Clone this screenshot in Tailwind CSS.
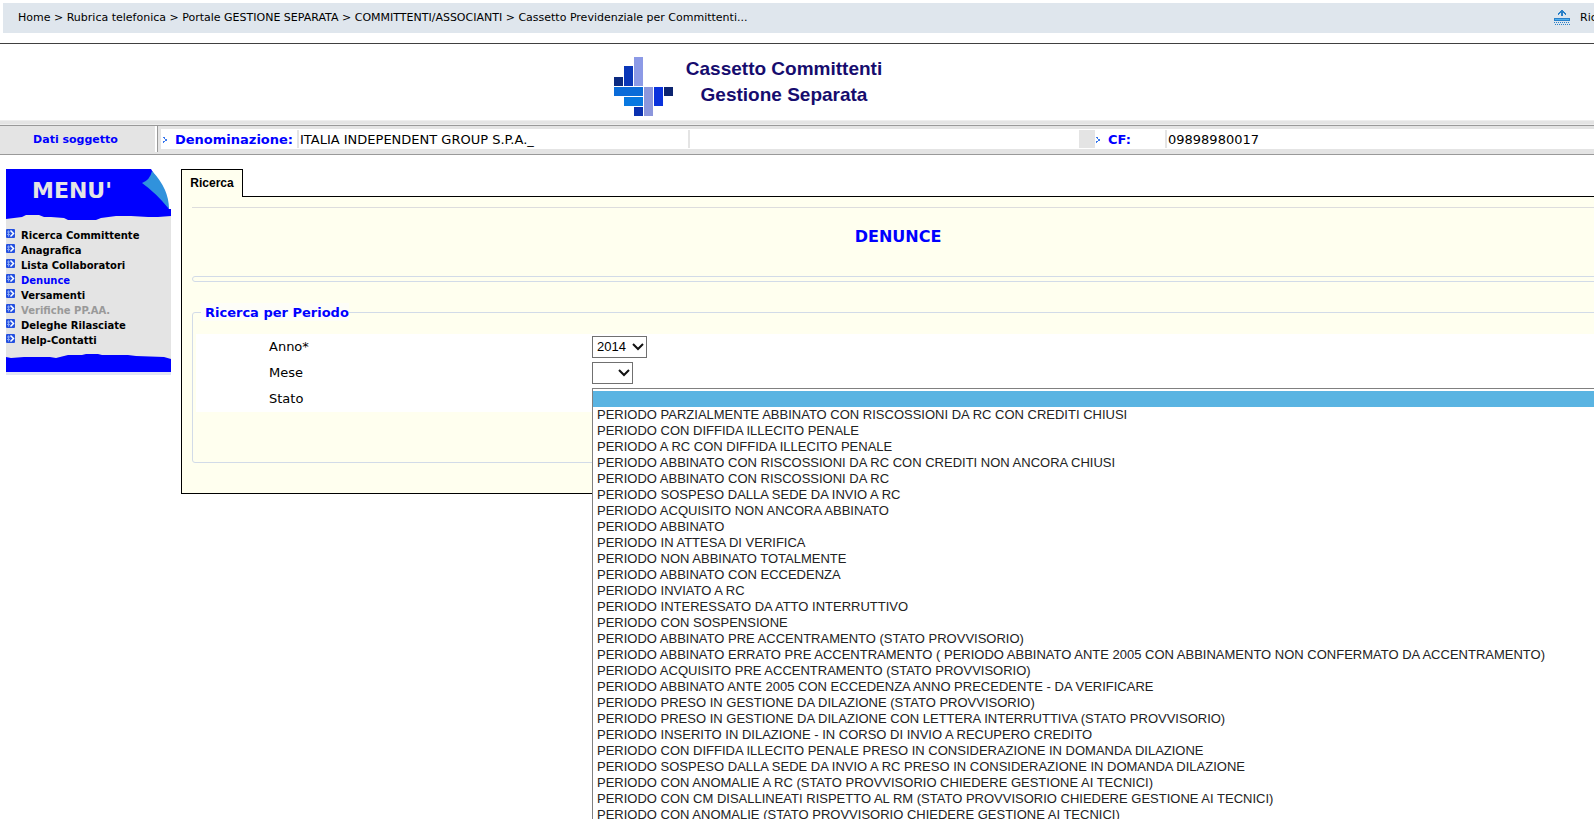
<!DOCTYPE html>
<html lang="it">
<head>
<meta charset="utf-8">
<title>Cassetto Committenti Gestione Separata</title>
<script src="https://cdn.jsdelivr.net/npm/@tailwindcss/browser@4"></script>
</head>
<body class="h-screen overflow-hidden bg-white font-['DejaVu_Sans',Verdana,sans-serif] text-[13px] leading-5 text-black">
<svg class="hidden">
  <symbol id="go" viewBox="0 0 9 9"><rect width="9" height="9" rx="1" fill="#2450e0"/><path d="M1 3h3M1 5.500h3M2.500 1.500v6" stroke="#8aa6f2" stroke-width="1"/><path d="M4.500 1.500 7.500 4.500 4.500 7.500" fill="none" stroke="#fff" stroke-width="1.500"/></symbol>
  <symbol id="dots" viewBox="0 0 5 7"><path d="M0 0h2v1H0zM1 1h1v1H1zM2 2h2v2H2zM0 4h2v1H0zM0 5h1v1H0z" fill="#3a78ee"/></symbol>
</svg>

<nav class="mt-[3px] ml-[3px] flex h-[30px] items-center bg-[#dfe6ed] pl-[15px] text-[11px]">
  <p class="whitespace-nowrap"><a href="#">Home</a> &gt; <a href="#">Rubrica telefonica</a> &gt; <a href="#">Portale GESTIONE SEPARATA</a> &gt; <a href="#">COMMITTENTI/ASSOCIANTI</a> &gt; <a href="#">Cassetto Previdenziale per Committenti...</a></p>
  <a href="#" class="ml-auto flex w-[40px] shrink-0 items-center gap-[10px] overflow-hidden">
    <svg class="h-4 w-4 shrink-0" viewBox="0 0 16 16" shape-rendering="crispEdges"><path d="M7 0h2v1h1v1h1v1h1v2h-1V4h-1V3H9v3H7V3H6v1H5v1H4V3h1V2h1V1h1z" fill="#2a80c8"/><path d="M0 8h16v3H0z" fill="#2a80c8"/><path d="M1 9h14v1H1z" fill="#4fb0f0"/><path d="M0 12.500h16M1 14.500h15" stroke="#2a80c8" stroke-dasharray="1 1"/></svg>
    <span>Ricerca</span>
  </a>
</nav>

<header class="mt-[10px] flex h-[77px] items-center justify-center gap-[13px] border-t border-[#404040] pr-[99px]">
  <svg class="mt-[9px] h-[60px] w-[60px]" viewBox="0 0 60 60">
    <path d="M21 0h9v29h-9z" fill="#8c9ae6"/><path d="M11 9h9v20h-9z" fill="#0a37b8"/><path d="M1 20h9v9H1z" fill="#0b2a80"/>
    <path d="M1 30h29v9H1z" fill="#0a6bd8"/><path d="M11 40h19v9H11z" fill="#0878e0"/><path d="M21 50h9v9h-9z" fill="#0a30b0"/>
    <path d="M31 30h9v29h-9z" fill="#8c96dc"/><path d="M41 30h9v19h-9z" fill="#0a32dc"/><path d="M51 30h9v9h-9z" fill="#0c2470"/>
  </svg>
  <h1 class="text-center font-['Liberation_Sans',Arial,sans-serif] text-[19px] leading-[26px] font-bold text-[#160c6e]">Cassetto Committenti<br>Gestione Separata</h1>
</header>

<section class="border-y border-t-[#eeeeee] border-b-[#999999]">
  <div class="h-1 border-b border-[#eeeeee] bg-[#e4e4e4]"></div>
  <div class="flex h-[29px] border-t border-[#999999] bg-[#e4e4e4]">
    <h2 class="w-[155px] shrink-0 pt-[4px] pr-[4px] text-center text-[11px] font-bold text-[#0000ff]">Dati soggetto</h2>
    <div class="mb-[2px] w-[3px] shrink-0 border-r border-[#999999] bg-white"></div>
    <div class="mt-[3px] ml-[3px] flex h-5 grow items-center bg-white">
      <svg class="mt-[2px] ml-[2px] h-[7px] w-[5px]"><use href="#dots"/></svg>
      <b class="ml-[7px] w-[122px] shrink-0 pt-[2px] text-[#0000ff]">Denominazione:</b>
      <span class="h-[18px] w-[391px] shrink-0 border-l-2 border-[#e4e4e4] pl-px leading-5">ITALIA INDEPENDENT GROUP S.P.A._</span>
      <span class="h-[18px] w-[391px] shrink-0 border-l-2 border-[#e4e4e4]"></span>
      <span class="h-[18px] w-4 shrink-0 bg-[#e4e4e4]"></span>
      <svg class="mt-[2px] ml-px h-[7px] w-[5px]"><use href="#dots"/></svg>
      <b class="ml-[7px] w-[57px] shrink-0 pt-[2px] text-[#0000ff]">CF:</b>
      <span class="h-[18px] border-l-2 border-[#e4e4e4] pl-px leading-5">09898980017</span>
    </div>
  </div>
</section>

<div class="mt-[14px] flex items-start gap-[10px] pl-[6px]">
  <aside class="w-[165px] shrink-0 bg-[#e4e4e4]">
    <div class="relative h-[51px]">
      <svg class="absolute inset-0 h-full w-full" viewBox="0 0 165 51"><path d="M0 0H165V47L152 48 142 48 125 47 110 47 95 49 90 51 62 51 58 49 45 48 38 48 33 46 20 46 16 48 0 50z" fill="#0000ff"/><path d="M145 0h20v40h-2L156 18z" fill="#fff"/><path d="M136 14Q144 11 146 2 163 20 163 40 150 24 136 14z" fill="#3092dc"/></svg>
      <h2 class="relative pt-[8px] pl-[26px] text-[22px] leading-7 font-bold text-[#e4e4e4]">MENU'</h2>
    </div>
    <ul class="pt-[8px] text-[10px] leading-[15px] font-bold">
      <li><a href="#" class="flex gap-[6px]"><svg class="mt-px h-[9px] w-[9px]"><use href="#go"/></svg>Ricerca Committente</a></li>
      <li><a href="#" class="flex gap-[6px]"><svg class="mt-px h-[9px] w-[9px]"><use href="#go"/></svg>Anagrafica</a></li>
      <li><a href="#" class="flex gap-[6px]"><svg class="mt-px h-[9px] w-[9px]"><use href="#go"/></svg>Lista Collaboratori</a></li>
      <li><a href="#" class="flex gap-[6px] text-[#0000ff]"><svg class="mt-px h-[9px] w-[9px]"><use href="#go"/></svg>Denunce</a></li>
      <li><a href="#" class="flex gap-[6px]"><svg class="mt-px h-[9px] w-[9px]"><use href="#go"/></svg>Versamenti</a></li>
      <li><a href="#" class="flex gap-[6px] text-[#999999]"><svg class="mt-px h-[9px] w-[9px]"><use href="#go"/></svg>Verifiche PP.AA.</a></li>
      <li><a href="#" class="flex gap-[6px]"><svg class="mt-px h-[9px] w-[9px]"><use href="#go"/></svg>Deleghe Rilasciate</a></li>
      <li><a href="#" class="flex gap-[6px]"><svg class="mt-px h-[9px] w-[9px]"><use href="#go"/></svg>Help-Contatti</a></li>
    </ul>
    <svg class="mt-[6px] block h-[18px] w-full" viewBox="0 0 165 18"><path d="M0 3 5 4 18 3 44 3 50 4 62 1 76 1 80 0 92 0 96 1 122 1 130 2 158 3 165 5V18H0z" fill="#0000ff"/></svg>
    <div class="h-[3px] bg-[#e2e6f4]"></div>
  </aside>

  <main class="-mr-[10px] min-w-0 grow">
    <div class="flex">
      <button type="button" class="h-[28px] w-[62px] border border-b-0 border-black bg-[#ffffef] pb-[2px] font-['Liberation_Sans',Arial,sans-serif] text-[12px] font-bold">Ricerca</button>
      <div class="grow border-b border-black"></div>
    </div>
    <div class="h-[297px] border-b border-l border-black bg-[#ffffef] pl-[10px]">
      <div class="pt-[10px]"><hr class="border-[#dddddd]"></div>
      <h2 class="pt-[17px] text-center text-base leading-6 font-bold text-[#0000ff]">DENUNCE</h2>
      <div class="mt-[27px] h-[6px] rounded-l-[3px] border border-[#d2dbe8]"></div>
      <fieldset class="mt-[21px] rounded-[3px] border border-[#d2dbe8] pl-[3px]">
        <legend class="ml-[5px] bg-[#fdfdf8] pt-[2px] pl-[4px] leading-4 font-bold text-[#0000ff]">Ricerca per Periodo</legend>
        <div class="mt-[13px] mb-[50px] bg-white">
          <div class="flex h-[26px] items-center pl-[73px]">
            <label for="anno" class="w-[323px] shrink-0">Anno*</label>
            <div class="relative"><select id="anno" class="block h-[22px] w-[55px] appearance-none border border-[#707070] bg-white pl-[4px] font-['Liberation_Sans',Arial,sans-serif] text-[13px]"><option>2014</option></select>
            <svg class="pointer-events-none absolute top-[7px] right-[3px] h-[8px] w-[12px]" viewBox="0 0 12 8"><path d="M1 1 6 6 11 1" fill="none" stroke="#111" stroke-width="2"/></svg></div>
          </div>
          <div class="flex h-[26px] items-center pl-[73px]">
            <label for="mese" class="w-[323px] shrink-0">Mese</label>
            <div class="relative"><select id="mese" class="block h-[22px] w-[41px] appearance-none border border-[#707070] bg-white"><option></option></select>
            <svg class="pointer-events-none absolute top-[7px] right-[3px] h-[8px] w-[12px]" viewBox="0 0 12 8"><path d="M1 1 6 6 11 1" fill="none" stroke="#111" stroke-width="2"/></svg></div>
          </div>
          <div class="flex h-[26px] items-center pl-[73px]">
            <label for="stato" class="w-[323px] shrink-0">Stato</label>
            <div class="relative h-[22px] grow">
              <select id="stato" size="28" class="absolute top-0 left-0 w-full overflow-hidden border border-[#808080] bg-white pt-[2px] font-['Liberation_Sans',Arial,sans-serif] text-[13px] leading-4 text-[#222222] [&>option]:h-4 [&>option]:min-h-0 [&>option]:px-[4px] [&>option]:py-0 [&>option]:leading-4">
                <option selected class="bg-linear-to-r from-[#5ab4e2] to-[#5ab4e2]"></option>
                <option>PERIODO PARZIALMENTE ABBINATO CON RISCOSSIONI DA RC CON CREDITI CHIUSI</option>
                <option>PERIODO CON DIFFIDA ILLECITO PENALE</option>
                <option>PERIODO A RC CON DIFFIDA ILLECITO PENALE</option>
                <option>PERIODO ABBINATO CON RISCOSSIONI DA RC CON CREDITI NON ANCORA CHIUSI</option>
                <option>PERIODO ABBINATO CON RISCOSSIONI DA RC</option>
                <option>PERIODO SOSPESO DALLA SEDE DA INVIO A RC</option>
                <option>PERIODO ACQUISITO NON ANCORA ABBINATO</option>
                <option>PERIODO ABBINATO</option>
                <option>PERIODO IN ATTESA DI VERIFICA</option>
                <option>PERIODO NON ABBINATO TOTALMENTE</option>
                <option>PERIODO ABBINATO CON ECCEDENZA</option>
                <option>PERIODO INVIATO A RC</option>
                <option>PERIODO INTERESSATO DA ATTO INTERRUTTIVO</option>
                <option>PERIODO CON SOSPENSIONE</option>
                <option>PERIODO ABBINATO PRE ACCENTRAMENTO (STATO PROVVISORIO)</option>
                <option>PERIODO ABBINATO ERRATO PRE ACCENTRAMENTO ( PERIODO ABBINATO ANTE 2005 CON ABBINAMENTO NON CONFERMATO DA ACCENTRAMENTO)</option>
                <option>PERIODO ACQUISITO PRE ACCENTRAMENTO (STATO PROVVISORIO)</option>
                <option>PERIODO ABBINATO ANTE 2005 CON ECCEDENZA ANNO PRECEDENTE - DA VERIFICARE</option>
                <option>PERIODO PRESO IN GESTIONE DA DILAZIONE (STATO PROVVISORIO)</option>
                <option>PERIODO PRESO IN GESTIONE DA DILAZIONE CON LETTERA INTERRUTTIVA (STATO PROVVISORIO)</option>
                <option>PERIODO INSERITO IN DILAZIONE - IN CORSO DI INVIO A RECUPERO CREDITO</option>
                <option>PERIODO CON DIFFIDA ILLECITO PENALE PRESO IN CONSIDERAZIONE IN DOMANDA DILAZIONE</option>
                <option>PERIODO SOSPESO DALLA SEDE DA INVIO A RC PRESO IN CONSIDERAZIONE IN DOMANDA DILAZIONE</option>
                <option>PERIODO CON ANOMALIE A RC (STATO PROVVISORIO CHIEDERE GESTIONE AI TECNICI)</option>
                <option>PERIODO CON CM DISALLINEATI RISPETTO AL RM (STATO PROVVISORIO CHIEDERE GESTIONE AI TECNICI)</option>
                <option>PERIODO CON ANOMALIE (STATO PROVVISORIO CHIEDERE GESTIONE AI TECNICI)</option>
              </select>
            </div>
          </div>
        </div>
      </fieldset>
    </div>
  </main>
</div>
</body>
</html>
